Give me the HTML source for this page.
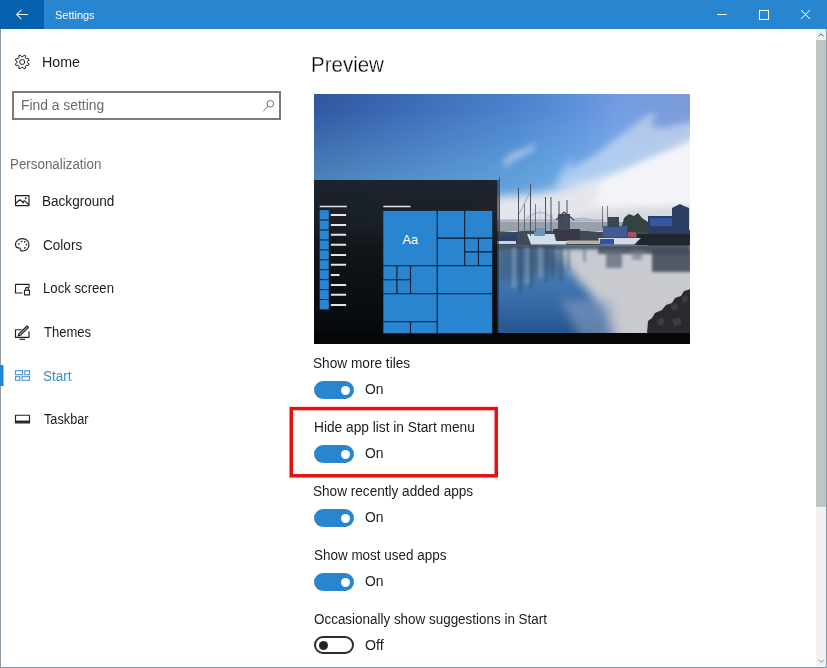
<!DOCTYPE html>
<html>
<head>
<meta charset="utf-8">
<title>Settings</title>
<style>
html,body{margin:0;padding:0;}
body{width:827px;height:668px;position:relative;overflow:hidden;background:#fff;font-family:"Liberation Sans",sans-serif;color:#1a1a1a;}
.abs{position:absolute;}
.t{position:absolute;white-space:nowrap;line-height:1;transform-origin:0 0;}
#titlebar{left:0;top:0;width:827px;height:29px;background:#2886d0;}
#back{left:0;top:0;width:44px;height:29px;background:#0561ad;}
.nav{font-size:13.8px;color:#1c1c1c;}
.lbl{font-size:13.8px;color:#1c1c1c;}
.tog{position:absolute;left:314px;width:40px;height:18px;border-radius:9px;background:#2886d0;}
.tog i{position:absolute;left:26.5px;top:4.5px;width:9px;height:9px;border-radius:50%;background:#fff;}
.togoff{position:absolute;left:314px;width:36px;height:14px;border-radius:9px;border:2px solid #2b2b2b;background:#fff;}
.togoff i{position:absolute;left:3px;top:2.5px;width:9px;height:9px;border-radius:50%;background:#222;}
</style>
</head>
<body>
<!-- title bar -->
<div id="titlebar" class="abs"></div>
<div id="back" class="abs"></div>
<svg class="abs" style="left:0;top:0" width="827" height="29" viewBox="0 0 827 29">
  <g fill="none" stroke="#eef6fd" stroke-width="1.05">
    <path d="M16.700 14.500H28 M21.400 9.800L16.700 14.500L21.400 19.200"/>
    <path d="M717 14.500H726.700"/>
    <rect x="759.5" y="10.5" width="9" height="9"/>
    <path d="M801 10L810 19M810 10L801 19"/>
  </g>
</svg>
<div class="t" id="tSettings" style="left:55.30px;top:9.38px;font-size:11.6px;color:#fff;transform:scaleX(0.9443);">Settings</div>

<!-- window borders -->
<div class="abs" style="left:0;top:29px;width:1px;height:639px;background:#8b9ba6;"></div>
<div class="abs" style="left:0;top:667px;width:827px;height:1px;background:#8b97a3;"></div>
<div class="abs" style="left:826px;top:29px;width:1px;height:639px;background:#8b9ba6;"></div>

<!-- scrollbar -->
<div class="abs" style="left:816px;top:29px;width:10px;height:638px;background:#f1f1f1;"></div>
<div class="abs" style="left:816px;top:40px;width:10px;height:467px;background:#c2c3c3;"></div>
<svg class="abs" style="left:816px;top:29px" width="10" height="638" viewBox="0 0 10 638">
  <path d="M2.700 7.400L5.200 4.800L7.700 7.400" fill="none" stroke="#5a5a5a" stroke-width="1"/>
  <path d="M2.700 630.800L5.200 633.400L7.700 630.800" fill="none" stroke="#8e8e8e" stroke-width="1"/>
</svg>

<!-- sidebar -->
<div class="t nav" id="tHome" style="left:42.18px;top:56.42px;transform:scaleX(1.0324);">Home</div>
<div class="abs" style="left:12px;top:91px;width:265px;height:25px;border:2px solid #7a7a7a;"></div>
<svg class="abs" style="left:258px;top:96px" width="20" height="20" viewBox="258 96 20 20"><g fill="none" stroke="#6e6e6e" stroke-width="1"><circle cx="270.300" cy="103.800" r="3.300"/><path d="M267.900 106.300L263.300 111.200"/></g></svg>
<div class="t" id="tFind" style="left:21.29px;top:99.04px;font-size:13.8px;color:#6b6b6b;transform:scaleX(1.0044);">Find a setting</div>
<div class="t" id="tPers" style="left:9.80px;top:157.52px;font-size:13.8px;color:#6b6b6b;transform:scaleX(0.9691);">Personalization</div>
<div class="t nav" id="tBg" style="left:42.34px;top:194.92px;transform:scaleX(0.9822);">Background</div>
<div class="t nav" id="tCol" style="left:42.61px;top:238.50px;transform:scaleX(0.9832);">Colors</div>
<div class="t nav" id="tLock" style="left:42.71px;top:282.08px;transform:scaleX(0.9546);">Lock screen</div>
<div class="t nav" id="tThemes" style="left:44.42px;top:326.23px;transform:scaleX(0.9436);">Themes</div>
<div class="t nav" id="tStart" style="left:43.28px;top:369.95px;color:#3a8bd3;transform:scaleX(0.9747);">Start</div>
<div class="t nav" id="tTask" style="left:44.48px;top:413.07px;transform:scaleX(0.9221);">Taskbar</div>
<div class="abs" style="left:0;top:365px;width:4px;height:20.5px;background:linear-gradient(90deg,#2886d0 0,#2886d0 3px,#94c3e9 3px,#94c3e9 4px);"></div>

<!-- sidebar icons -->
<svg class="abs" id="icons" style="left:0;top:40px" width="40" height="400" viewBox="0 40 40 400">
  <g fill="none" stroke="#222" stroke-width="1.15" stroke-linejoin="round">
    <!-- gear -->
    <circle cx="22.200" cy="62" r="2.500" stroke-width="1"/>
    <path id="gear" d="M27.45 62.75L29.06 63.82L28.34 65.57L26.44 65.18L25.38 66.24L25.77 68.14L24.02 68.86L22.95 67.25L21.45 67.25L20.38 68.86L18.63 68.14L19.02 66.24L17.96 65.18L16.06 65.57L15.34 63.82L16.95 62.75L16.95 61.25L15.34 60.18L16.06 58.43L17.96 58.82L19.02 57.76L18.63 55.86L20.38 55.14L21.45 56.75L22.95 56.75L24.02 55.14L25.77 55.86L25.38 57.76L26.44 58.82L28.34 58.43L29.06 60.18L27.45 61.25Z" stroke-width="1"/>
    <!-- background -->
    <rect x="15.500" y="195.600" width="13.500" height="10"/>
    <path d="M15.500 203.500L19.800 199.700L24 203.300M22.500 202L24.300 200.600L29 204.800"/>
    <circle cx="25.700" cy="198.300" r="0.4"/>
    <!-- colors -->
    <path d="M22.300 238.600C18.300 238.600 15.500 241.300 15.500 244.300C15.500 246.600 17 247.900 18.600 247.900C19.700 247.900 20.300 248.500 20.300 249.300C20.300 250.500 21.300 251 22.600 251C26.300 251 29 248.300 29 244.800C29 241.200 26.200 238.600 22.300 238.600Z"/>
    <g fill="#222" stroke="none"><circle cx="19" cy="243.800" r="0.85"/><circle cx="21.600" cy="241.500" r="0.85"/><circle cx="24.800" cy="241.800" r="0.85"/><circle cx="26.500" cy="244.600" r="0.85"/><circle cx="24.800" cy="247.800" r="0.85"/></g>
    <!-- lock screen -->
    <path d="M22.500 293H15.500V284.400H29V288"/>
    <rect x="24.500" y="290.200" width="5" height="4.600"/>
    <path d="M25.600 290.200V288.800A1.400 1.400 0 0 1 28.400 288.800V290.200"/>
    <!-- themes -->
    <path d="M21.500 329.700H15.500V337.400H29V331.500"/>
    <path d="M19.500 339.300H25"/>
    <path d="M18.200 336L19 333.700L27 326L28.500 327.400L20.600 335.200Z" fill="#222" fill-opacity="0.35"/>
    <!-- taskbar -->
    <rect x="15.500" y="415.200" width="14" height="7.600"/>
    <path d="M15.500 421.600H29.500" stroke-width="2"/>
  </g>
  <!-- start -->
  <g fill="none" stroke="#4a93d6" stroke-width="1.1">
    <rect x="15.500" y="370.700" width="7" height="4"/>
    <rect x="24.800" y="370.700" width="4.700" height="4"/>
    <rect x="15.500" y="376.700" width="4.300" height="3.500"/>
    <rect x="22" y="376.700" width="7.500" height="3.500"/>
  </g>
</svg>

<!-- content -->
<div class="t" id="tPreview" style="left:311.09px;top:53.72px;font-size:21.6px;color:#000;-webkit-text-stroke:0.3px #fff;transform:scaleX(0.9496);">Preview</div>

<svg class="abs" id="photo" style="left:314px;top:94px" width="376" height="250" viewBox="314 94 376 250">
  <defs>
    <linearGradient id="sky" x1="0" y1="0" x2="1" y2="0">
      <stop offset="0" stop-color="#2e569d"/>
      <stop offset="0.175" stop-color="#3764af"/>
      <stop offset="0.36" stop-color="#4173be"/>
      <stop offset="0.55" stop-color="#4b82cd"/>
      <stop offset="0.71" stop-color="#5f91dc"/>
      <stop offset="0.81" stop-color="#739be1"/>
      <stop offset="1" stop-color="#7d9bd7"/>
    </linearGradient>
    <linearGradient id="skyv" x1="0" y1="0" x2="0" y2="1">
      <stop offset="0" stop-color="#96ebff" stop-opacity="0"/>
      <stop offset="0.1" stop-color="#96ebff" stop-opacity="0.02"/>
      <stop offset="0.55" stop-color="#96ebff" stop-opacity="0.28"/>
      <stop offset="1" stop-color="#a5e4ff" stop-opacity="0.45"/>
    </linearGradient>
    <linearGradient id="water" x1="0" y1="0" x2="0" y2="1">
      <stop offset="0" stop-color="#5f7f9f"/>
      <stop offset="0.3" stop-color="#4a7db3"/>
      <stop offset="0.65" stop-color="#3669a8"/>
      <stop offset="1" stop-color="#26558d"/>
    </linearGradient>
    <linearGradient id="smenu" x1="0" y1="0" x2="0" y2="1">
      <stop offset="0" stop-color="#1b2028"/>
      <stop offset="0.3" stop-color="#171b21"/>
      <stop offset="0.42" stop-color="#0f1317"/>
      <stop offset="1" stop-color="#050608"/>
    </linearGradient>
    <filter id="b5" x="-20%" y="-20%" width="140%" height="140%"><feGaussianBlur stdDeviation="5"/></filter>
    <filter id="b3" x="-20%" y="-20%" width="140%" height="140%"><feGaussianBlur stdDeviation="3"/></filter>
    <filter id="b2" x="-20%" y="-20%" width="140%" height="140%"><feGaussianBlur stdDeviation="1.6"/></filter>
    <filter id="b1" x="-20%" y="-20%" width="140%" height="140%"><feGaussianBlur stdDeviation="0.7"/></filter>
    <clipPath id="pc"><rect x="314" y="94" width="376" height="250"/></clipPath>
  </defs>
  <g clip-path="url(#pc)">
    <rect x="314" y="94" width="376" height="152" fill="url(#sky)"/>
    <rect x="314" y="94" width="376" height="152" fill="url(#skyv)"/>
    <!-- clouds -->
    <g filter="url(#b5)">
      <path d="M480 250V197L520 195L545 192L567 186L592 180L616 174L640 166L664 154L700 134V250Z" fill="#e4e6ec"/>
    </g>
    <g filter="url(#b3)">
      <path d="M552 186L572 168L596 154L622 134L648 115L656 113L651 126L664 128L700 120V160L640 172L590 188Z" fill="#eef1f8" opacity="0.48"/>
      <path d="M602 182L642 162L700 140V206H592Z" fill="#f6f7fa" opacity="0.85"/>
      <path d="M503 161L512 153L524 149L536 143L534 150L522 157L512 161L505 168Z" fill="#b5caf0" opacity="0.85"/>
      <path d="M556 176L566 164L574 156L572 168L562 178Z" fill="#c5d5f2" opacity="0.45"/>
      <path d="M495 222L600 212L700 204V246H495Z" fill="#d6d7de" opacity="0.85"/>
    </g>
    <!-- water -->
    <rect x="314" y="245" width="376" height="90" fill="url(#water)"/>
    <g filter="url(#b5)">
      <path d="M552 246L700 246V292L660 318L650 345H614L604 308L580 282Z" fill="#c9cbd1"/>
      <path d="M560 300L612 300L622 345H585Z" fill="#8fa3c0" opacity="0.55"/>
      <path d="M498 246H560L566 270L498 282Z" fill="#33536f" opacity="0.55"/>
    </g>
    <g filter="url(#b2)">
      <!-- reflections -->
      <rect x="497" y="245" width="193" height="4" fill="#3a4656" opacity="0.8"/>
      <rect x="598" y="246" width="92" height="8" fill="#3f4959" opacity="0.8"/>
      <rect x="652" y="250" width="40" height="22" fill="#3d4654" opacity="0.85"/>
      <rect x="606" y="250" width="16" height="18" fill="#5d6878" opacity="0.75"/>
      <rect x="632" y="250" width="10" height="10" fill="#6c7686" opacity="0.6"/>
      <rect x="512" y="248" width="4" height="40" fill="#9fb6cf" opacity="0.45"/>
      <rect x="519" y="248" width="3" height="44" fill="#2c4d70" opacity="0.6"/>
      <rect x="525" y="248" width="4" height="36" fill="#9fb6cf" opacity="0.4"/>
      <rect x="530" y="248" width="3" height="40" fill="#2c4d70" opacity="0.6"/>
      <rect x="538" y="248" width="5" height="30" fill="#a9bdd3" opacity="0.4"/>
      <rect x="545" y="248" width="3" height="34" fill="#2f506f" opacity="0.55"/>
      <rect x="551" y="248" width="3" height="30" fill="#2f506f" opacity="0.5"/>
      <rect x="559" y="248" width="4" height="34" fill="#3a5878" opacity="0.55"/>
      <rect x="567" y="248" width="3" height="22" fill="#4a6684" opacity="0.5"/>
      <rect x="583" y="248" width="3" height="14" fill="#56657a" opacity="0.5"/>
    </g>
    <!-- horizon: bridge, boats, buildings -->
    <g filter="url(#b1)">
      <path d="M497 222.500Q505 218.500 513 222.500" fill="none" stroke="#b4bac6" stroke-width="1.4"/>
      <path d="M524 222Q540 203 556 222" fill="none" stroke="#c2c8d3" stroke-width="1.9"/>
      <path d="M569 221.500Q581 215.500 594 220.500" fill="none" stroke="#b4bac6" stroke-width="1.5"/>
      <path d="M497 220.500H604" stroke="#a9b0bd" stroke-width="1.8"/>
      <path d="M528 221V214M534 221V209M540 221V207M546 221V209M552 221V214" stroke="#b4bac6" stroke-width="0.6"/>
      <!-- dark base -->
      <path d="M497 231L515 232L528 230L553 231L575 230L600 232L622 229L640 230L690 230V245H497Z" fill="#414957"/>
      <rect x="497" y="222" width="126" height="9" fill="#8d95a3" opacity="0.85"/>
      <!-- trees -->
      <path d="M622 226L624 218L629 214L634 216L638 213L642 218L648 222V232H622Z" fill="#36423f"/>
      <!-- building -->
      <path d="M648 216H672V208L676 206L680 204L684 206L689 208V246H648Z" fill="#2b3d63"/>
      <rect x="650" y="218" width="22" height="8" fill="#3457a0"/>
      <path d="M637 234H690V245H637Z" fill="#24272e"/>
      <!-- boats -->
      <path d="M497 237L517 234V244H497Z" fill="#2b426c"/>
      <path d="M497 241H516V244H497Z" fill="#c9d3df"/>
      <path d="M527 234H570L566 244.500H531Z" fill="#cfe0ea"/>
      <rect x="534" y="228" width="11" height="8" fill="#6d93b5"/>
      <path d="M553 229H580V241H556Z" fill="#373b45"/>
      <path d="M558 214H570V230H558Z" fill="#434a58"/>
      <path d="M556 220L564 212L574 220" fill="none" stroke="#3a404c" stroke-width="1.2"/>
      <rect x="567" y="240.500" width="33" height="3.500" fill="#b9b2a4"/>
      <path d="M598 238H641L634 244.500H601Z" fill="#d2dbe6"/>
      <rect x="600" y="239" width="14" height="5.500" fill="#2d55a6"/>
      <rect x="603" y="226" width="24" height="11" fill="#3f5d92"/>
      <rect x="608" y="217" width="11" height="10" fill="#3a4558"/>
      <rect x="628" y="232" width="8" height="5" fill="#a85060"/>
      <!-- masts -->
      <g stroke="#475062" stroke-width="1">
        <path d="M499.500 177V238"/>
        <path d="M518.500 188V238"/>
        <path d="M530.500 184V236"/>
        <path d="M545.500 197V232"/>
        <path d="M551 197V232"/>
        <path d="M559 201V228"/>
        <path d="M567 200V228"/>
        <path d="M524.500 204V238" stroke-width="0.7"/>
        <path d="M535.500 204V232" stroke-width="0.7"/>
        <path d="M602.500 206V228" stroke-width="0.7"/>
        <path d="M607.500 206V228" stroke-width="0.7"/>
        <path d="M519 214L530 192" stroke="#8a96ab" stroke-width="0.8"/>
      </g>
    </g>
    <!-- rocks -->
    <g filter="url(#b1)">
      <path d="M691 289L684 291L681 296L675 298L672 303L666 305L662 310L655 313L652 318L648 321L647 334H691Z" fill="#2b2b2d"/><path d="M670 306L676 303L679 308L673 311Z M682 297L687 295L688 301L683 303Z M657 320L663 317L665 323L659 326Z M672 320L679 317L682 324L674 327Z" fill="#4b4a47" opacity="0.55"/>
    </g>
    <!-- start menu -->
    <rect x="314" y="180" width="183.500" height="154" fill="url(#smenu)" opacity="0.97"/>
    <rect x="497.500" y="180" width="1.500" height="154" fill="#1a2230" opacity="0.55"/>
    <!-- taskbar -->
    <rect x="314" y="333" width="376" height="11" fill="#050607"/>
    <!-- TILES -->
    <rect x="383.3" y="210.9" width="108.9" height="122.4" fill="#2985cf"/>
    <g stroke="#0a1a2c" stroke-width="1.1" fill="none">
      <path d="M437.2 210.9V333.3 M464.7 210.9V265.8 M478.4 238.1V265.8 M437.2 238.1H492.2 M464.7 251.9H492.2 M383.3 265.8H492.2 M396.9 265.8V293.8 M410.5 265.8V293.8 M383.3 279.8H410.5 M383.3 293.8H492.2 M383.3 321.8H437.2 M410.5 321.8V333.3"/>
    </g>
    <text x="402.600" y="243.900" font-family="'Liberation Sans', sans-serif" font-size="12.400" fill="#fff" textLength="15.4" lengthAdjust="spacingAndGlyphs">Aa</text>
    <!-- app list -->
    <rect x="319.7" y="210.1" width="9.1" height="99.3" fill="#2985cf"/>
    <g stroke="#0a1a2c" stroke-width="1">
      <path d="M319.7 220H328.8 M319.7 230H328.8 M319.7 239.900H328.8 M319.7 249.800H328.8 M319.7 259.800H328.8 M319.7 269.700H328.8 M319.7 279.600H328.8 M319.7 289.600H328.8 M319.7 299.500H328.8"/>
    </g>
    <g stroke="#e4e4e4" stroke-width="2">
      <path d="M330.9 214.9H346.1 M330.9 224.9H346.1 M330.9 234.8H346.1 M330.9 244.8H346.1 M330.9 254.9H346.1 M330.9 264.8H346.1 M330.9 275H339.5 M330.9 284.9H346.1 M330.9 294.8H346.1 M330.9 305H346.1"/>
    </g>
    <g stroke="#e4e4e4" stroke-width="1.6">
      <path d="M319.7 206.5H346.9 M383.3 206.5H410.5"/>
    </g>
  </g>
</svg>

<div class="t lbl" id="l1" style="left:313.45px;top:356.76px;transform:scaleX(0.9898);">Show more tiles</div>
<div class="tog" style="top:381px"><i></i></div>
<div class="t lbl on" id="on1" style="left:364.86px;top:382.62px;transform:scaleX(1.0060);">On</div>

<div class="t lbl" id="l2" style="left:313.58px;top:420.89px;transform:scaleX(0.9942);">Hide app list in Start menu</div>
<div class="tog" style="top:445px"><i></i></div>
<div class="t lbl on" id="on2" style="left:364.86px;top:446.55px;transform:scaleX(1.0060);">On</div>

<div class="t lbl" id="l3" style="left:313.48px;top:484.62px;transform:scaleX(0.9849);">Show recently added apps</div>
<div class="tog" style="top:509px"><i></i></div>
<div class="t lbl on" id="on3" style="left:364.86px;top:511.08px;transform:scaleX(1.0060);">On</div>

<div class="t lbl" id="l4" style="left:313.68px;top:548.51px;transform:scaleX(0.9754);">Show most used apps</div>
<div class="tog" style="top:573px"><i></i></div>
<div class="t lbl on" id="on4" style="left:364.86px;top:575.01px;transform:scaleX(1.0060);">On</div>

<div class="t lbl" id="l5" style="left:313.90px;top:612.74px;transform:scaleX(0.9737);">Occasionally show suggestions in Start</div>
<div class="togoff" style="top:636px"><i></i></div>
<div class="t lbl" id="off" style="left:364.80px;top:638.74px;transform:scaleX(1.0317);">Off</div>

<!-- red highlight -->
<svg class="abs" style="left:285px;top:400px" width="220" height="85" viewBox="285 400 220 85">
  <rect x="291.25" y="408.6" width="205" height="67.2" fill="none" stroke="#e8100f" stroke-width="3.5"/>
</svg>
</body>
</html>
